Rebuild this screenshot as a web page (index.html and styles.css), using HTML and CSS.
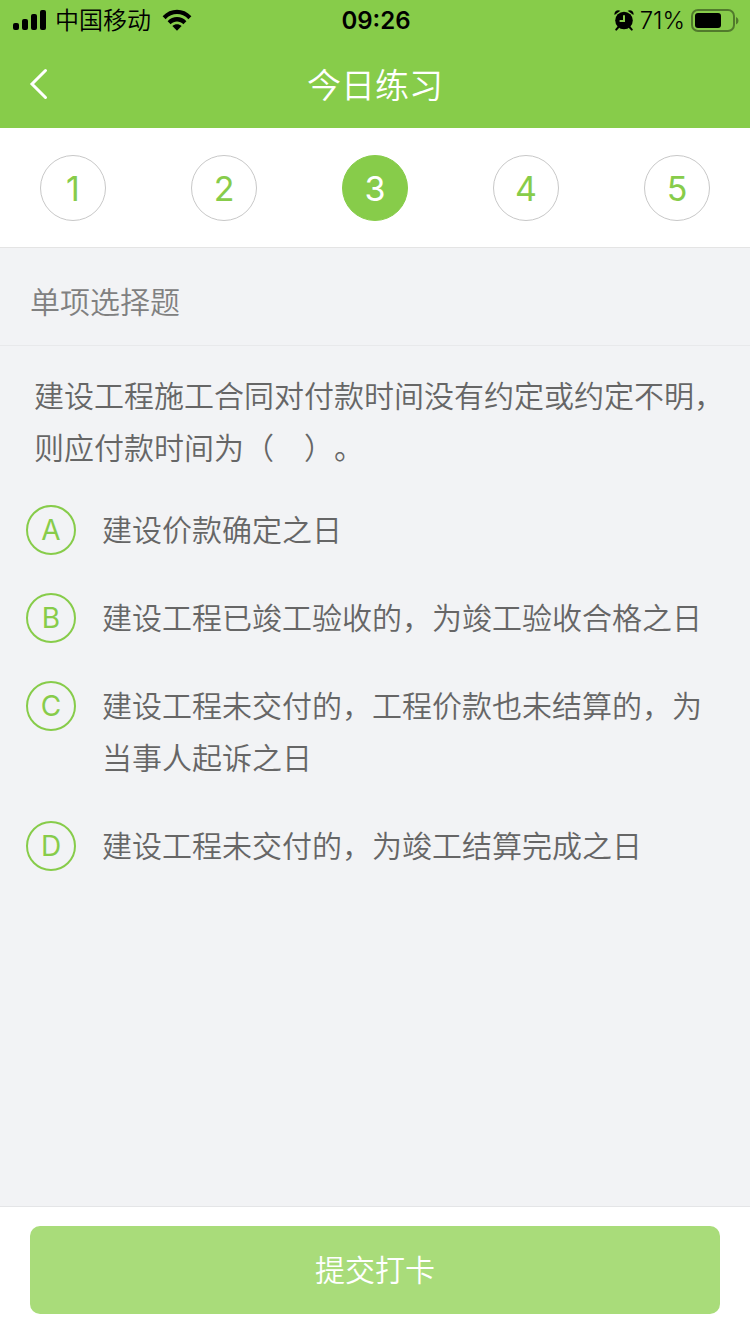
FILE: index.html
```html
<!DOCTYPE html>
<html lang="zh-CN">
<head>
    <meta charset="UTF-8">
    <meta name="viewport" content="width=device-width, initial-scale=1.0">
    <title>今日练习</title>
    <link rel="stylesheet" href="styles.css">
</head>
<body>
    <header class="header">
        <div class="status-bar">
            <div class="status-left">
                <svg class="icon-signal" width="34" height="22" viewBox="0 0 34 22" aria-hidden="true">
                    <rect x="0" y="13" width="6" height="7" rx="2"/>
                    <rect x="9" y="9" width="6" height="11" rx="2"/>
                    <rect x="18" y="4" width="6" height="16" rx="2"/>
                    <rect x="27" y="0" width="6" height="20" rx="2"/>
                </svg>
                <span class="carrier">中国移动</span>
                <svg class="icon-wifi" width="30" height="24" viewBox="0 0 30 24" aria-hidden="true">
                    <path d="M0.6 7.2C8.6-1.4 21.4-1.4 29.4 7.2L26.4 10.2C20 3.4 10 3.4 3.6 10.2Z"/>
                    <path d="M5.6 12.2C10.8 6.6 19.2 6.6 24.4 12.2L21.4 15.2C17.8 11.5 12.2 11.5 8.6 15.2Z"/>
                    <path d="M10.4 17.1C13 14.6 17 14.6 19.6 17.1L15 21.8Z"/>
                </svg>
            </div>
            <span class="time">09:26</span>
            <div class="status-right">
                <svg class="icon-alarm" width="20" height="24" viewBox="0 0 20 24" aria-hidden="true">
                    <circle cx="10" cy="11.5" r="8.8"/>
                    <path d="M0.6 6C-0.4 2.4 3.2 0 6.4 1.7Z"/>
                    <path d="M19.4 6C20.4 2.4 16.8 0 13.6 1.7Z"/>
                    <path class="alarm-feet" d="M4.5 18L2.2 20.6M15.5 18L17.8 20.6"/>
                    <path class="alarm-hands" d="M10 6.3V12H5.6"/>
                </svg>
                <span class="percent">71%</span>
                <svg class="icon-battery" width="48" height="24" viewBox="0 0 48 24" aria-hidden="true">
                    <rect class="battery-case" x="1" y="1" width="42" height="21" rx="6"/>
                    <rect x="4" y="4" width="26" height="15" rx="3"/>
                    <path class="battery-tip" d="M45 8C48.3 9.5 48.3 14 45 15.5Z"/>
                </svg>
            </div>
        </div>
        <div class="nav-bar">
            <a class="back" href="#" aria-label="返回">
                <svg width="20" height="32" viewBox="0 0 20 32" aria-hidden="true">
                    <path d="M17.5 2.5L4 16L17.5 29.5"/>
                </svg>
            </a>
            <h1 class="title">今日练习</h1>
        </div>
    </header>

    <nav class="steps">
        <button type="button" class="step">1</button>
        <button type="button" class="step">2</button>
        <button type="button" class="step active">3</button>
        <button type="button" class="step">4</button>
        <button type="button" class="step">5</button>
    </nav>

    <form class="quiz">
        <h2 class="question-type">单项选择题</h2>
        <fieldset class="question">
            <legend class="question-text">建设工程施工合同对付款时间没有约定或约定不明，则应付款时间为（　）。</legend>
            <div class="options">
                <label class="option">
                    <span class="mark"><input type="radio" name="answer" value="A"><span>A</span></span>
                    <span class="option-text">建设价款确定之日</span>
                </label>
                <label class="option">
                    <span class="mark"><input type="radio" name="answer" value="B"><span>B</span></span>
                    <span class="option-text">建设工程已竣工验收的，为竣工验收合格之日</span>
                </label>
                <label class="option">
                    <span class="mark"><input type="radio" name="answer" value="C"><span>C</span></span>
                    <span class="option-text">建设工程未交付的，工程价款也未结算的，为当事人起诉之日</span>
                </label>
                <label class="option">
                    <span class="mark"><input type="radio" name="answer" value="D"><span>D</span></span>
                    <span class="option-text">建设工程未交付的，为竣工结算完成之日</span>
                </label>
            </div>
        </fieldset>
        <div class="footer">
            <button type="submit" class="submit-btn">提交打卡</button>
        </div>
    </form>
</body>
</html>
```

FILE: styles.css
```css
* {
    box-sizing: border-box;
}
body {
    margin: 0;
    min-height: 100vh;
    display: flex;
    flex-direction: column;
    background: #f2f3f5;
    color: #666;
    font-family: Inter, "Noto Sans CJK SC", sans-serif;
    font-size: 30px;
    font-weight: 350;
    text-spacing-trim: space-all;
}
button {
    font: inherit;
    cursor: pointer;
}
.header {
    background: #87cc4a;
}
.status-bar {
    display: grid;
    grid-template-columns: 1fr auto 1fr;
    align-items: center;
    height: 40px;
    padding: 2px 11px 0 13px;
    color: #000;
    font-size: 24px;
    line-height: 38px;
}
.status-left,
.status-right {
    display: flex;
    align-items: center;
}
.status-left {
    gap: 8px;
}
.icon-wifi {
    margin-left: 3px;
}
.status-right {
    justify-content: flex-end;
    gap: 6px;
}
.time {
    font-weight: 600;
}
.alarm-feet {
    fill: none;
    stroke: #000;
    stroke-width: 2;
    stroke-linecap: round;
}
.alarm-hands {
    fill: none;
    stroke: #87cc4a;
    stroke-width: 2;
}
.battery-case {
    fill: none;
    stroke: #000;
    stroke-width: 2;
    opacity: 0.4;
}
.battery-tip {
    opacity: 0.4;
}
.nav-bar {
    display: grid;
    grid-template-columns: 1fr auto 1fr;
    align-items: center;
    height: 88px;
    padding: 0 28px;
}
.back {
    display: flex;
    justify-self: start;
}
.back path {
    fill: none;
    stroke: #fff;
    stroke-width: 3;
    stroke-linecap: round;
}
.title {
    margin: 0;
    padding-bottom: 2px;
    color: #fff;
    font-size: 34px;
    font-weight: 350;
}
.steps {
    display: flex;
    justify-content: space-between;
    padding: 27px 40px 26px;
    background: #fff;
    border-bottom: 1px solid #e4e4e4;
}
.step {
    width: 66px;
    height: 66px;
    padding: 0;
    border: 1px solid #c8c8c8;
    border-radius: 50%;
    background: #fff;
    color: #87cc4a;
    font-size: 34px;
    font-weight: 400;
}
.step.active {
    border-color: #87cc4a;
    background: #87cc4a;
    color: #fff;
}
.quiz {
    flex: 1;
    display: flex;
    flex-direction: column;
}
.question-type {
    margin: 0;
    padding: 28px 30px 17px;
    border-bottom: 1px solid #e8e9eb;
    color: #808080;
    font-size: 30px;
    font-weight: 350;
    line-height: 52px;
}
.question {
    flex: 1;
    min-width: 0;
    margin: 0;
    padding: 24px 24px 30px 26px;
    border: 0;
    line-height: 52px;
}
.question-text {
    float: left;
    width: 100%;
    padding: 0 0 30px 8px;
}
.options {
    clear: both;
    display: flex;
    flex-direction: column;
    gap: 36px;
}
.option {
    display: flex;
    align-items: flex-start;
    gap: 26px;
    cursor: pointer;
}
.mark {
    flex: none;
    display: grid;
    place-items: center;
    height: 52px;
    color: #87cc4a;
    font-size: 28px;
    font-weight: 400;
}
.mark input,
.mark span {
    grid-area: 1 / 1;
}
.mark input {
    appearance: none;
    width: 50px;
    height: 50px;
    margin: 0;
    border: 2px solid #87cc4a;
    border-radius: 50%;
    cursor: pointer;
}
.mark input:checked {
    background: #87cc4a;
}
.mark input:checked + span {
    color: #fff;
}
.footer {
    padding: 19px 30px 20px;
    border-top: 1px solid #e4e5e7;
    background: #fff;
}
.submit-btn {
    display: block;
    width: 100%;
    height: 88px;
    padding: 0 0 4px;
    border: 0;
    border-radius: 10px;
    background: #a9dc7a;
    color: #fff;
}
```
